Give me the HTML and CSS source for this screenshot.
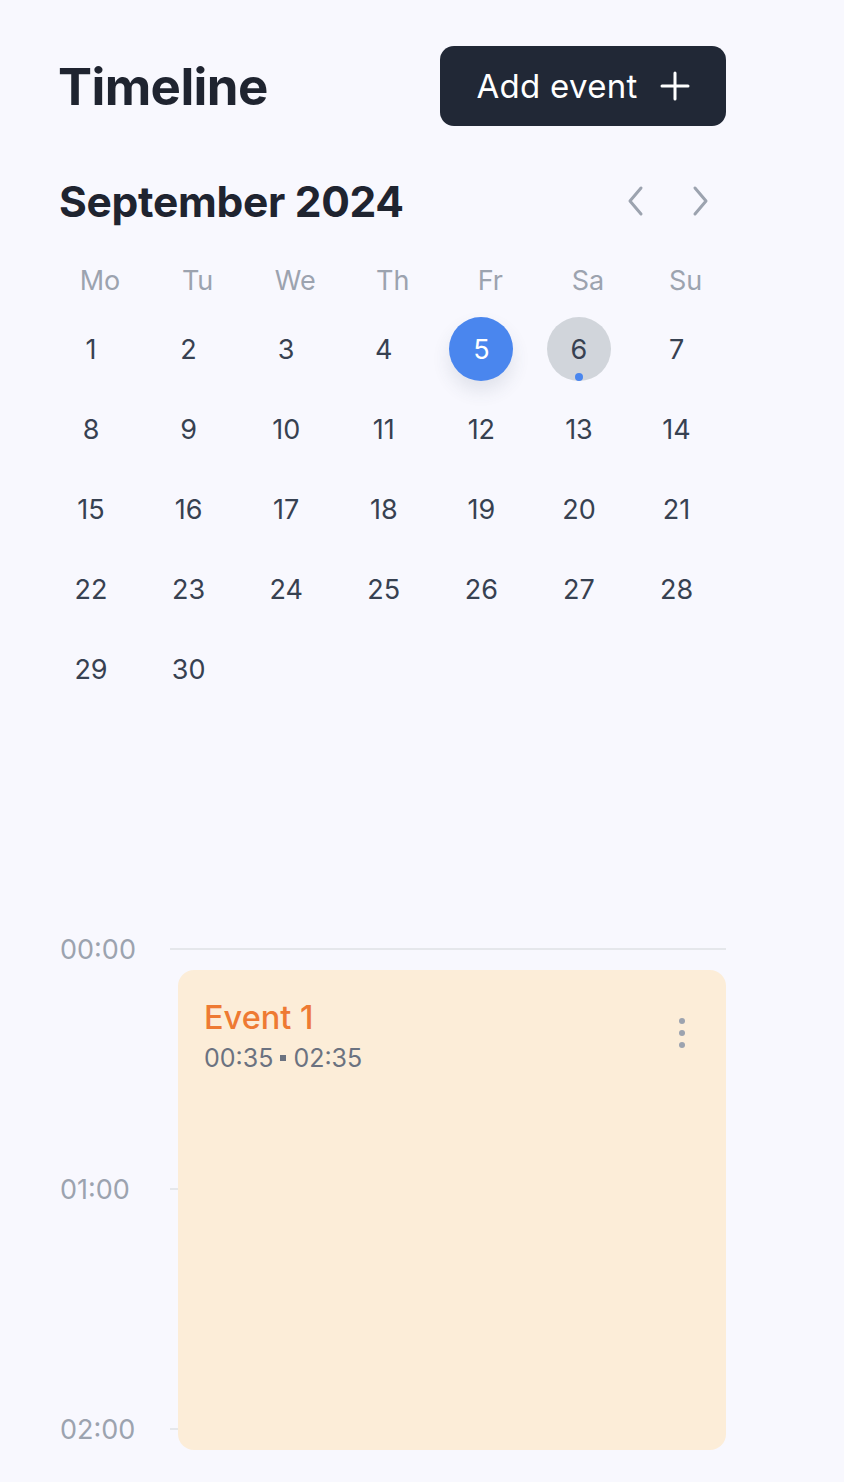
FILE: index.html
```html
<!DOCTYPE html>
<html lang="en">
<head>
<meta charset="utf-8">
<title>Timeline</title>
<link rel="stylesheet" href="styles.css">
</head>
<body>
<div class="page">
  <header class="header">
    <h1 class="title">Timeline</h1>
    <button class="add-btn">
      <span>Add event</span>
      <svg class="plus" width="30" height="30" viewBox="0 0 30 30"><path d="M15 2v26M2 15h26" stroke="#fff" stroke-width="3" stroke-linecap="round"/></svg>
    </button>
  </header>

  <div class="month-row">
    <h2 class="month">September 2024</h2>
    <div class="nav">
      <svg width="20" height="32" viewBox="0 0 20 32"><path d="M15 3L4 16l11 13" fill="none" stroke="#9ca3af" stroke-width="3" stroke-linecap="round" stroke-linejoin="round"/></svg>
      <svg width="20" height="32" viewBox="0 0 20 32"><path d="M5 3l11 13L5 29" fill="none" stroke="#9ca3af" stroke-width="3" stroke-linecap="round" stroke-linejoin="round"/></svg>
    </div>
  </div>

  <div class="weekdays">
    <div class="wd">Mo</div><div class="wd">Tu</div><div class="wd">We</div><div class="wd">Th</div><div class="wd">Fr</div><div class="wd">Sa</div><div class="wd">Su</div>
  </div>

  <div class="days">
    <div class="day"><span class="num">1</span></div>
    <div class="day"><span class="num">2</span></div>
    <div class="day"><span class="num">3</span></div>
    <div class="day"><span class="num">4</span></div>
    <div class="day"><span class="num selected">5</span></div>
    <div class="day"><span class="num marked">6<i class="dot"></i></span></div>
    <div class="day"><span class="num">7</span></div>
    <div class="day"><span class="num">8</span></div>
    <div class="day"><span class="num">9</span></div>
    <div class="day"><span class="num">10</span></div>
    <div class="day"><span class="num">11</span></div>
    <div class="day"><span class="num">12</span></div>
    <div class="day"><span class="num">13</span></div>
    <div class="day"><span class="num">14</span></div>
    <div class="day"><span class="num">15</span></div>
    <div class="day"><span class="num">16</span></div>
    <div class="day"><span class="num">17</span></div>
    <div class="day"><span class="num">18</span></div>
    <div class="day"><span class="num">19</span></div>
    <div class="day"><span class="num">20</span></div>
    <div class="day"><span class="num">21</span></div>
    <div class="day"><span class="num">22</span></div>
    <div class="day"><span class="num">23</span></div>
    <div class="day"><span class="num">24</span></div>
    <div class="day"><span class="num">25</span></div>
    <div class="day"><span class="num">26</span></div>
    <div class="day"><span class="num">27</span></div>
    <div class="day"><span class="num">28</span></div>
    <div class="day"><span class="num">29</span></div>
    <div class="day"><span class="num">30</span></div>
  </div>

  <div class="timeline">
    <div class="hour"><span class="time">00:00</span><span class="line"></span></div>
    <div class="hour"><span class="time">01:00</span><span class="line"></span></div>
    <div class="hour last"><span class="time">02:00</span><span class="line"></span></div>
    <div class="event">
      <div class="event-text">
        <div class="event-title">Event 1</div>
        <div class="event-time">00:35 <span class="sq"></span> 02:35</div>
      </div>
      <div class="kebab"><i></i><i></i><i></i></div>
    </div>
  </div>
</div>
</body>
</html>
```

FILE: styles.css
```css
* { box-sizing: border-box; }
html, body { margin: 0; padding: 0; }
body {
  background: #f8f8fe;
  font-family: "Inter", "Noto Sans", sans-serif;
  color: #1f2430;
}
.page {
  padding: 46px 0 0 60px;
  width: 726px;
}
.header {
  display: flex;
  justify-content: space-between;
  align-items: center;
  height: 80px;
}
.title {
  margin: 0 0 0 -2px;
  font-size: 51px;
  font-weight: 700;
  letter-spacing: -0.6px;
  color: #1f2430;
}
.add-btn {
  width: 286px;
  height: 80px;
  border: none;
  border-radius: 14px;
  background: #212836;
  color: #fff;
  font-family: inherit;
  font-size: 33px;
  font-weight: 400;
  letter-spacing: 0.3px;
  display: flex;
  align-items: center;
  justify-content: center;
  gap: 22px;
  padding: 0;
}
.plus { display: block; }
.month-row {
  margin-top: 45px;
  height: 60px;
  display: flex;
  justify-content: space-between;
  align-items: center;
}
.month {
  margin: 0 0 0 -1px;
  font-size: 42.5px;
  font-weight: 700;
  letter-spacing: -0.3px;
  color: #1f2430;
}
.nav {
  display: flex;
  gap: 44px;
  padding-right: 16px;
}
.nav svg { display: block; }
.weekdays {
  margin-top: 30px;
  display: grid;
  grid-template-columns: repeat(7, 97.6px);
  height: 40px;
}
.wd {
  width: 80px;
  text-align: center;
  line-height: 40px;
  font-size: 27px;
  color: #9ca3af;
}
.days {
  margin-top: 8px;
  display: grid;
  grid-template-columns: repeat(7, 97.6px);
  grid-auto-rows: 80px;
}
.day {
  display: flex;
  align-items: center;
}
.num {
  position: relative;
  width: 62px;
  height: 64px;
  border-radius: 50%;
  display: flex;
  align-items: center;
  justify-content: center;
  font-size: 27px;
  color: #374151;
}
.num.selected {
  width: 64px;
  margin-left: -1px;
  background: #4a86ee;
  color: #fff;
  box-shadow: 0 10px 18px rgba(60, 70, 100, 0.12);
}
.num.marked {
  width: 64px;
  margin-left: -1px;
  background: #d1d5db;
}
.dot {
  position: absolute;
  left: 50%;
  bottom: 0;
  width: 8px;
  height: 8px;
  margin-left: -4px;
  border-radius: 50%;
  background: #4a86ee;
}
.timeline {
  position: relative;
  margin-top: 229px;
}
.hour {
  display: flex;
  height: 240px;
  align-items: flex-start;
}
.hour.last { height: 44px; }
.time {
  width: 110px;
  height: 24px;
  line-height: 24px;
  font-size: 27px;
  color: #9ca3af;
}
.line {
  flex: 1;
  height: 2px;
  margin-top: 10px;
  background: #e5e7eb;
}
.event {
  position: absolute;
  top: 32px;
  left: 118px;
  right: 0;
  height: 480px;
  background: #fcedd8;
  border-radius: 16px;
  padding: 29px 41px 0 26px;
  display: flex;
  justify-content: space-between;
  align-items: flex-start;
}
.event-title {
  font-size: 32.5px;
  line-height: 38px;
  color: #ee7a33;
  font-weight: 500;
}
.event-time {
  margin-top: 5px;
  font-size: 25px;
  line-height: 32px;
  color: #6b7280;
  display: flex;
  align-items: center;
  gap: 7px;
}
.sq {
  display: inline-block;
  width: 6px;
  height: 6px;
  background: #6b7280;
}
.kebab {
  margin-top: 19px;
  display: flex;
  flex-direction: column;
  gap: 6px;
}
.kebab i {
  width: 6px;
  height: 6px;
  border-radius: 50%;
  background: #9ca3af;
}
```
